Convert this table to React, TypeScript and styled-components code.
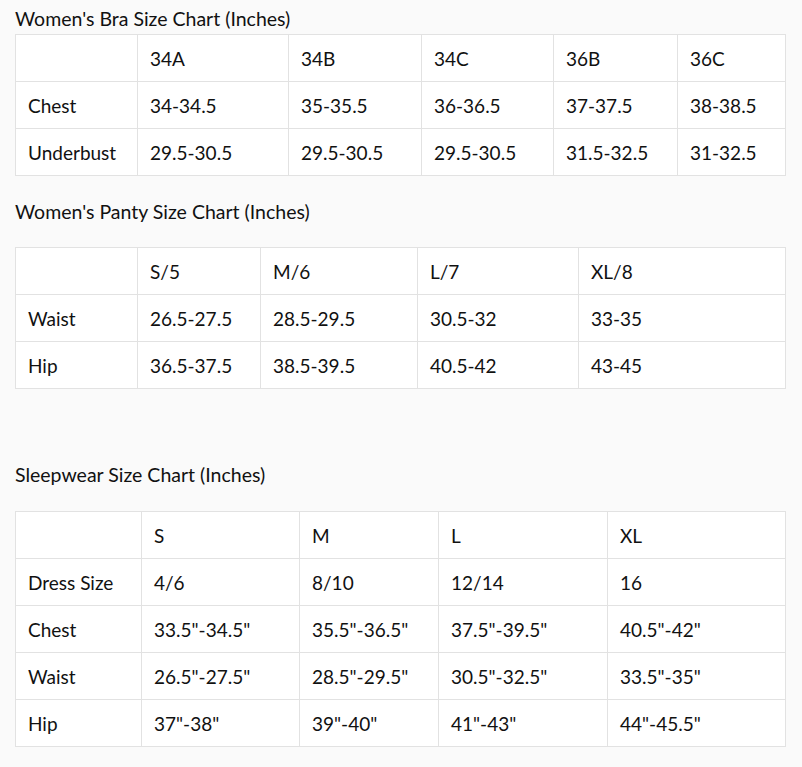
import React from "react";
import styled, { createGlobalStyle } from "styled-components";

const Global = createGlobalStyle`
  html, body {
    margin: 0;
    padding: 0;
    background: #fafafa;
  }
  body {
    font-family: Lato, "Open Sans", sans-serif;
    color: #111111;
  }
`;

const Page = styled.div`
  width: 802px;
  min-height: 767px;
  padding: 7px 0 0 15px;
  box-sizing: border-box;
  display: flex;
  flex-direction: column;
`;

const Section = styled.section<{ $top: number }>`
  margin-top: ${(p) => p.$top}px;
  display: flex;
  flex-direction: column;
`;

const Title = styled.h2<{ $gap: number }>`
  margin: 0 0 ${(p) => p.$gap}px 0;
  font-size: 19.5px;
  line-height: 24px;
  font-weight: 400;
  letter-spacing: 0;
`;

const Table = styled.table`
  border-collapse: collapse;
  table-layout: fixed;
  width: 770px;
  background: #ffffff;
`;

const Col = styled.col<{ $w: number }>`
  width: ${(p) => p.$w}px;
`;

const Cell = styled.td`
  border: 1px solid #e2e2e2;
  height: 47px;
  padding: 2px 12px 0 12px;
  box-sizing: border-box;
  font-size: 19px;
  line-height: 22px;
  vertical-align: middle;
  white-space: nowrap;
`;

type Chart = {
  title: string;
  top: number;
  gap: number;
  widths: number[];
  rows: string[][];
};

const charts: Chart[] = [
  {
    title: "Women's Bra Size Chart (Inches)",
    top: 0,
    gap: 3,
    widths: [122, 151, 133, 132, 124, 108],
    rows: [
      ["", "34A", "34B", "34C", "36B", "36C"],
      ["Chest", "34-34.5", "35-35.5", "36-36.5", "37-37.5", "38-38.5"],
      ["Underbust", "29.5-30.5", "29.5-30.5", "29.5-30.5", "31.5-32.5", "31-32.5"],
    ],
  },
  {
    title: "Women's Panty Size Chart (Inches)",
    top: 24,
    gap: 23,
    widths: [122, 123, 157, 161, 207],
    rows: [
      ["", "S/5", "M/6", "L/7", "XL/8"],
      ["Waist", "26.5-27.5", "28.5-29.5", "30.5-32", "33-35"],
      ["Hip", "36.5-37.5", "38.5-39.5", "40.5-42", "43-45"],
    ],
  },
  {
    title: "Sleepwear Size Chart (Inches)",
    top: 74,
    gap: 24,
    widths: [126, 158, 139, 169, 178],
    rows: [
      ["", "S", "M", "L", "XL"],
      ["Dress Size", "4/6", "8/10", "12/14", "16"],
      ["Chest", '33.5"-34.5"', '35.5"-36.5"', '37.5"-39.5"', '40.5"-42"'],
      ["Waist", '26.5"-27.5"', '28.5"-29.5"', '30.5"-32.5"', '33.5"-35"'],
      ["Hip", '37"-38"', '39"-40"', '41"-43"', '44"-45.5"'],
    ],
  },
];

function SizeChart({ chart }: { chart: Chart }) {
  return (
    <Section $top={chart.top}>
      <Title $gap={chart.gap}>{chart.title}</Title>
      <Table>
        <colgroup>
          {chart.widths.map((w, i) => (
            <Col key={i} $w={w} />
          ))}
        </colgroup>
        <tbody>
          {chart.rows.map((row, r) => (
            <tr key={r}>
              {row.map((c, i) => (
                <Cell key={i}>{c}</Cell>
              ))}
            </tr>
          ))}
        </tbody>
      </Table>
    </Section>
  );
}

export default function App() {
  return (
    <>
      <Global />
      <Page>
        {charts.map((c) => (
          <SizeChart key={c.title} chart={c} />
        ))}
      </Page>
    </>
  );
}
